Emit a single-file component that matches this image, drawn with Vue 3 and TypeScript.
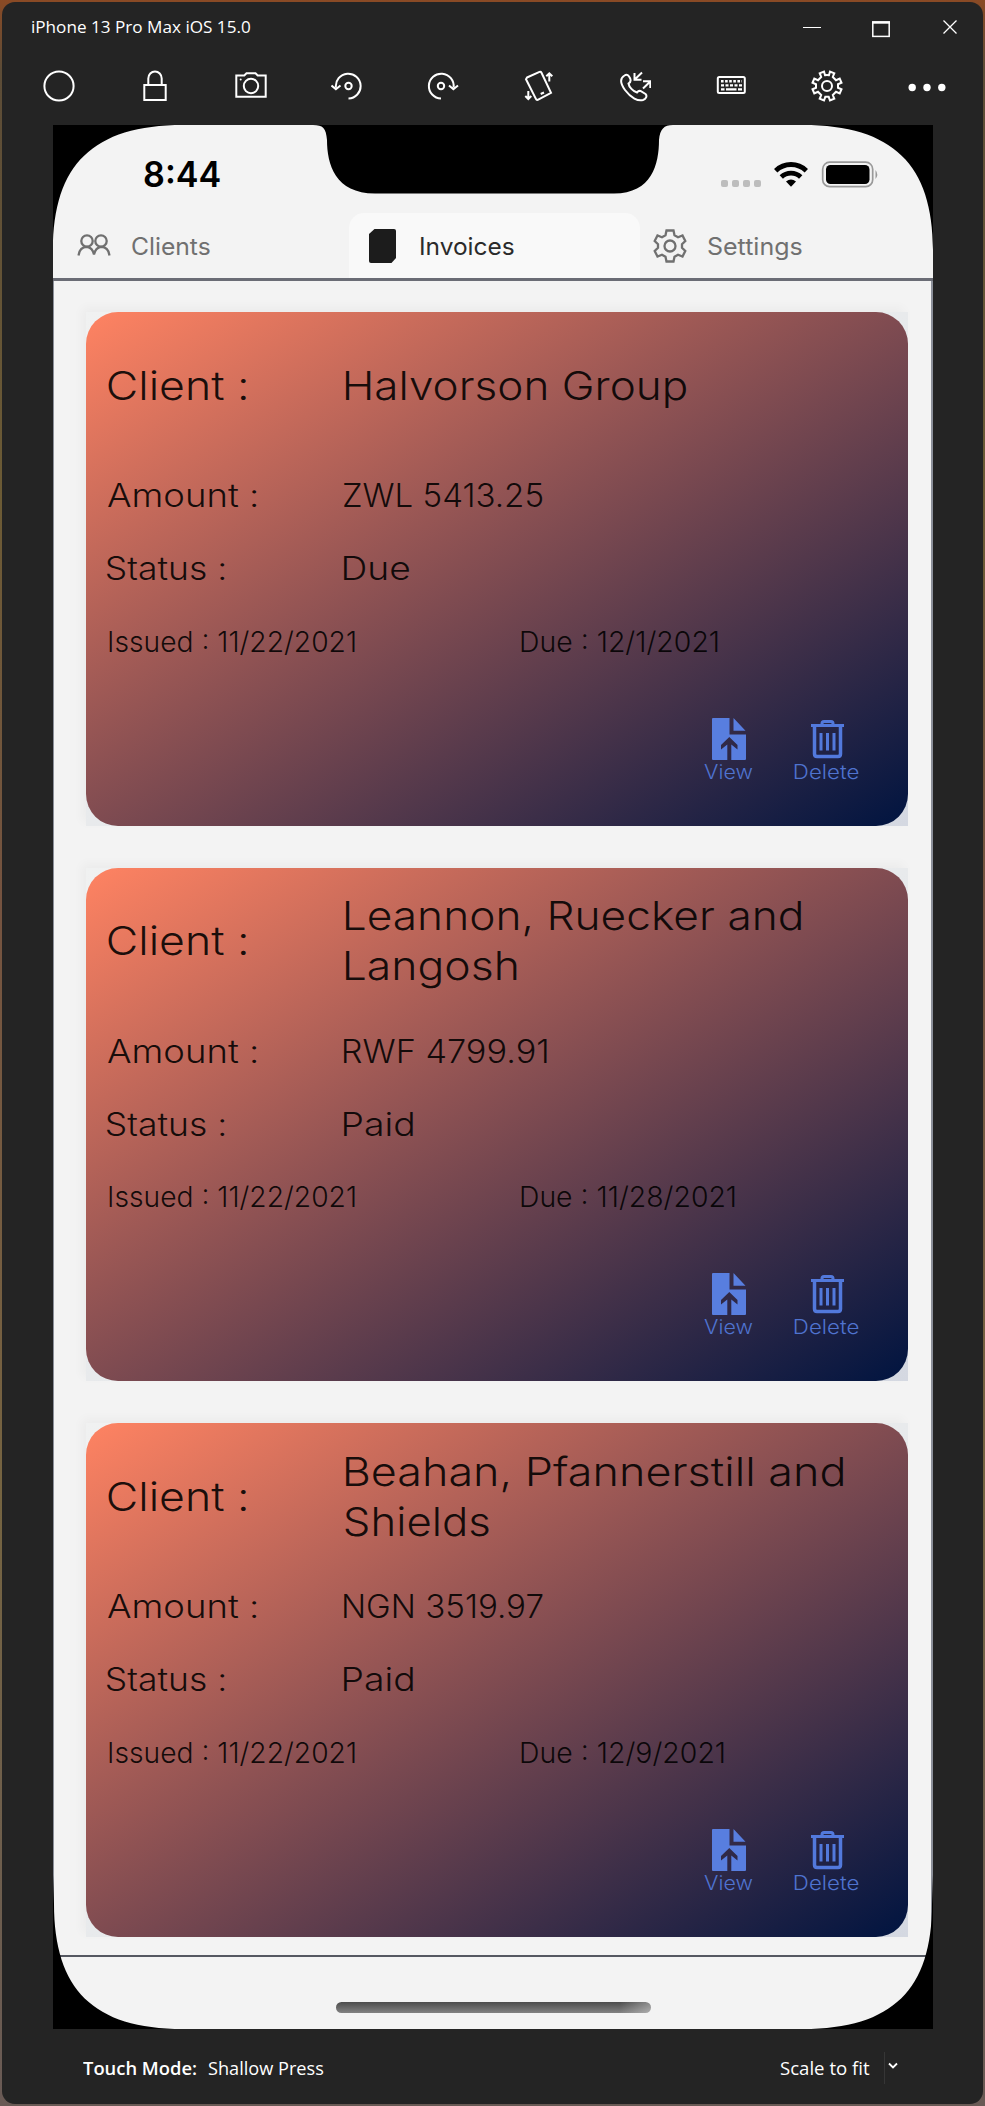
<script setup lang="ts">
interface Invoice {
  id: number
  client: { text: string; width: number }[]
  amount: string
  amountWidth: number
  status: string
  statusWidth: number
  due: string
  dueWidth: number
}

const invoices: Invoice[] = [
  {
    id: 1,
    client: [{ text: 'Halvorson Group', width: 341 }],
    amount: 'ZWL 5413.25', amountWidth: 198,
    status: 'Due', statusWidth: 65,
    due: 'Due : 12/1/2021', dueWidth: 197,
  },
  {
    id: 2,
    client: [{ text: 'Leannon, Ruecker and', width: 456 }, { text: 'Langosh', width: 172 }],
    amount: 'RWF 4799.91', amountWidth: 203,
    status: 'Paid', statusWidth: 69,
    due: 'Due : 11/28/2021', dueWidth: 214,
  },
  {
    id: 3,
    client: [{ text: 'Beahan, Pfannerstill and', width: 498 }, { text: 'Shields', width: 144 }],
    amount: 'NGN 3519.97', amountWidth: 199,
    status: 'Paid', statusWidth: 69,
    due: 'Due : 12/9/2021', dueWidth: 203,
  },
]

// Stretches a label horizontally so that its visible glyphs span the given width.
const vSpan = {
  mounted(el: HTMLElement, binding: { value: number }) {
    const ctx = document.createElement('canvas').getContext('2d')
    if (!ctx) return
    const css = getComputedStyle(el)
    ctx.font = `${css.fontWeight} ${css.fontSize} ${css.fontFamily}`
    const m = ctx.measureText((el.textContent ?? '').trim())
    const scale = binding.value / (m.actualBoundingBoxRight + m.actualBoundingBoxLeft)
    el.style.transform = `translateX(${m.actualBoundingBoxLeft * scale}px) scaleX(${scale})`
  },
}
</script>

<template>
  <div class="desktop">
    <div class="window">
      <header class="titlebar">
        <span v-span="218" class="label">iPhone 13 Pro Max iOS 15.0</span>
        <svg class="controls" width="156" height="20" viewBox="0 0 156 20" fill="none" stroke="#fff">
          <path d="M0 9.5H18" />
          <rect x="69.8" y="4" width="16.4" height="14.4" stroke-width="1.5" />
          <path d="M69 4.5H87" stroke-width="2.4" />
          <path d="M140.5 2.5L153.500 15.500M153.500 2.500L140.500 15.500" stroke-width="1.3" />
        </svg>
      </header>

      <nav class="toolbar">
        <svg viewBox="0 0 32 32"><circle cx="16" cy="16" r="14.6" /></svg>
        <svg viewBox="0 0 32 32"><path d="M5.300 15H26.700V30H5.300ZM9.300 15V8.500a6.700 7 0 0 1 13.400 0V15" /></svg>
        <svg viewBox="0 0 32 32">
          <path d="M1.300 5.500H9.300L11.500 3.300H20.500L22.700 5.500H30.700V26.700H1.300Z" />
          <circle cx="16" cy="16" r="7.200" /><circle cx="5.700" cy="9.500" r="1" class="solid" />
        </svg>
        <svg viewBox="0 0 32 32">
          <path d="M17.500 28.500A12.400 12.400 0 1 0 4.900 17.500M.5 15.500L4.900 19.300L9.500 15.500" /><circle cx="17.500" cy="16" r="3.200" />
        </svg>
        <svg viewBox="0 0 32 32">
          <path d="M14 28.500A12.400 12.400 0 1 1 26.600 17.500M22 15.500L26.400 19.300L31 15.500" /><circle cx="14" cy="16" r="3.200" />
        </svg>
        <svg viewBox="0 0 32 32">
          <path d="M4 7.500L16.500 1.900Q17.800 1.400 18.500 2.700L28 22.800L14.800 29.800Q13.500 30.200 12.900 28.900L3 9.200ZM17.700 24L21 22.500M26.300 11.500V3.500M23.300 6.300L26.300 3.300L29.300 6.300M5.300 21V29M2.300 26L5.300 29L8.300 26" />
        </svg>
        <svg viewBox="0 0 32 32">
          <path d="M5.500 5.500C1 8 .8 13 6 20C12 28 19 31.500 24 30C27 29 28.500 26 26.500 24L21.500 21Q19.500 20.400 18 22.500C14 21.500 10 17 9.500 13.500C12 12 12 10.500 11.200 8.500C9.700 5.200 8 4 5.500 5.500ZM23 2.500L16 9.300M15.500 3V9.800H22.500M24 18.500L31 11.800M24 11.200H31.300V18" />
        </svg>
        <svg viewBox="0 0 32 32">
          <rect x="2.800" y="7" width="27" height="16" rx="1.500" />
          <path d="M6 11.300H27" stroke-dasharray="2.600 1.500" stroke-width="2.400" />
          <path d="M6 15.300H27" stroke-dasharray="3 1.500" stroke-width="2.200" />
          <path d="M6 19.300H9.500M11 19.300H21.500M23 19.300H27" stroke-width="2.200" />
        </svg>
        <svg viewBox="0 0 32 32">
          <path d="M13 1.500L14 5.200Q16 4.800 18 5.200L19 1.500L23.300 3.200L21.800 7L25 10.200L28.700 8.500L30.500 12.800L27 14.200V17.800L30.500 19.200L28.700 23.500L25 21.800L21.800 25L23.300 28.800L19 30.500L17.700 26.800H14.300L13 30.500L8.700 28.800L10.200 25L7 21.800L3.300 23.500L1.500 19.200L5 17.800V14.200L1.500 12.800L3.300 8.500L7 10.200L10.200 7L8.700 3.200Z" />
          <circle cx="16" cy="16" r="5" />
        </svg>
        <svg class="more" viewBox="0 0 40 32">
          <g class="solid"><circle cx="5.200" cy="17.500" r="3.700" /><circle cx="20" cy="17.500" r="3.700" /><circle cx="34.800" cy="17.500" r="3.700" /></g>
        </svg>
      </nav>

      <main class="device">
        <div class="statusbar">
          <span v-span="76" class="clock label">8:44</span>
          <svg width="160" height="30" viewBox="0 0 160 30">
            <g fill="#bdbdbd">
              <rect x="1" y="20" width="7" height="7" rx="2" /><rect x="12" y="20" width="7" height="7" rx="2" />
              <rect x="23" y="20" width="7" height="7" rx="2" /><rect x="34" y="20" width="7" height="7" rx="2" />
            </g>
            <g fill="none" stroke="#000" stroke-width="4.800">
              <path d="M55.700 10.700A22 22 0 0 1 86.300 10.700" /><path d="M61.300 17A14 14 0 0 1 80.700 17" />
            </g>
            <path d="M66 21.500Q71 17.500 76 21.500L71 26.800Z" />
            <rect x="102.700" y="2.200" width="50" height="24.500" rx="7" fill="none" stroke="#999" stroke-width="1.700" />
            <rect x="106" y="5" width="43.500" height="19" rx="4.500" />
            <path d="M155.500 10Q159 14.500 155.500 19Z" fill="#999" />
          </svg>
        </div>

        <div class="tabs">
          <div class="tab clients">
            <svg width="34" height="34" viewBox="0 0 34 34">
              <circle cx="10" cy="12" r="5.700" /><circle cx="24" cy="12" r="5.700" />
              <path d="M1.500 26.500Q2.500 17.800 10 17.800Q15.500 18.500 17 25.500Q18.500 18.500 24 17.800Q31.500 17.800 32.500 26.500" />
            </svg>
            <span v-span="78" class="label">Clients</span>
          </div>
          <div class="tab active">
            <svg width="28" height="34" viewBox="0 0 28 34">
              <path d="M5.500 0H25Q27 0 27 2V29L22.500 34H2Q0 34 0 32V5Z" fill="#1c1c1c" stroke="none" />
            </svg>
            <span v-span="93" class="label">Invoices</span>
          </div>
          <div class="tab settings">
            <svg width="34" height="34" viewBox="0 0 34 34">
              <path d="M13.500 1.500H20.500L21.500 6.300L25 8.300L29.500 6.500L32.300 12L29 15.200V18.800L32.300 22L29.500 27.500L25 25.700L21.500 27.700L20.500 32.500H13.500L12.500 27.700L9 25.700L4.500 27.500L1.700 22L5 18.800V15.200L1.700 12L4.500 6.500L9 8.300L12.500 6.300Z" />
              <circle cx="17" cy="17" r="5.500" />
            </svg>
            <span v-span="94" class="label">Settings</span>
          </div>
        </div>

        <section class="list">
          <div v-for="invoice in invoices" :key="invoice.id" class="slot">
            <article class="card">
              <div class="row name">
                <span><span v-span="138" class="label">Client :</span></span>
                <div class="lines">
                  <div v-for="line in invoice.client" :key="line.text"><span v-span="line.width" class="label">{{ line.text }}</span></div>
                </div>
              </div>
              <div class="row">
                <span><span v-span="150" class="label">Amount :</span></span>
                <span><span v-span="invoice.amountWidth" class="label">{{ invoice.amount }}</span></span>
              </div>
              <div class="row">
                <span><span v-span="118" class="label">Status :</span></span>
                <span><span v-span="invoice.statusWidth" class="label">{{ invoice.status }}</span></span>
              </div>
              <div class="row dates">
                <span><span v-span="246" class="label">Issued : 11/22/2021</span></span>
                <span><span v-span="invoice.dueWidth" class="label">{{ invoice.due }}</span></span>
              </div>
              <div class="actions">
                <div class="action view">
                  <svg width="34" height="42" viewBox="0 0 34 42">
                    <path d="M1 0H17.500V16.500H34V41Q34 42 33 42H19.300V26.500L25.500 31.500V27L17.300 19L9 27V31.500L15.300 26.500V42H1Q0 42 0 41V1Q0 0 1 0ZM21.500 0L33.500 12.700H21.500Z" fill="#587edf" />
                  </svg>
                  <span v-span="49" class="label">View</span>
                </div>
                <div class="action delete">
                  <svg width="34" height="42" viewBox="0 0 34 42" fill="none" stroke="#5279dc">
                    <path d="M0 7.500H33M11 7V5.500Q11 3.500 13 3.500H20Q22 3.500 22 5.500V7" stroke-width="3" />
                    <path d="M3.500 8V36Q3.500 38.500 6 38.500H27Q29.500 38.500 29.500 36V8" stroke-width="3.500" />
                    <path d="M10 15V32.500M16.500 15V32.500M23 15V32.500" stroke-width="3" />
                  </svg>
                  <span v-span="65" class="label">Delete</span>
                </div>
              </div>
            </article>
          </div>
        </section>

        <div class="bottom"><div class="home"></div></div>

        <svg class="bezel" width="880" height="1904" viewBox="0 0 880 1904">
          <path d="M0 0H130C40 0 0 40 0 125ZM880 0H750C840 0 880 40 880 125ZM0 1904H130C40 1904 1 1864 1 1779L0 1750ZM880 1904H750C840 1904 879 1864 879 1779L880 1750Z" />
          <path d="M260 0C270 0 273 3 274 15C274 39 282 68.500 322 68.500H561C599 68.500 606 39 606 15C607 4 611 0 620 0Z" />
        </svg>
      </main>

      <footer class="footer">
        <b><span v-span="113" class="label">Touch Mode:</span></b>
        <span class="mode"><span v-span="115" class="label">Shallow Press</span></span>
        <span class="scale"><span v-span="90" class="label">Scale to fit</span></span>
        <i class="divider"></i>
        <svg width="10" height="8" viewBox="0 0 10 8"><path d="M1 1.500L5 5.500L9 1.500" fill="none" stroke="#fff" stroke-width="1.800" /></svg>
      </footer>
    </div>
  </div>
</template>

<style>
body { margin: 0; }
</style>

<style scoped>
* { box-sizing: border-box; }
svg { display: block; flex: none; }
.label { display: inline-block; white-space: nowrap; transform-origin: 0 50%; }
.desktop {
  width: 985px; height: 2106px; padding: 2px;
  background: linear-gradient(#8a4a25 0, #5c4c37 70px, #6c5b35 500px, #755340 900px, #756441 1500px, #695a55 2106px);
}
.window {
  width: 981px; height: 2102px; border-radius: 13px; background: #242424; color: #fff;
  display: flex; flex-direction: column; font-family: "Open Sans", "Noto Sans", sans-serif;
}
.titlebar { height: 50px; padding: 0 25px 0 30px; display: flex; justify-content: space-between; align-items: flex-start; font-size: 17px; line-height: 24px; }
.titlebar .label { margin-top: 13px; }
.controls { margin-top: 16px; }
.titlebar .controls { margin-right: -1px; }
.toolbar { height: 73px; display: grid; grid-template-columns: repeat(9, 95.900px) 1fr; padding-left: 9.500px; align-items: start; }
.toolbar svg { width: 32px; height: 32px; margin: 18px 0 0 32px; fill: none; stroke: #fff; stroke-width: 2; }
.toolbar svg:first-child { margin-left: 31.500px; }
.toolbar svg.more { width: 40px; margin-left: 32px; }
.toolbar .solid { fill: #fff; stroke: none; }
.device {
  position: relative; width: 880px; height: 1904px; margin-left: 51px; flex: none; overflow: hidden;
  background: #f3f3f3; color: #000; display: flex; flex-direction: column; font-family: Inter, "Liberation Sans", sans-serif;
}
.statusbar { height: 88px; display: flex; justify-content: space-between; padding: 0 53px 0 91px; }
.statusbar svg { margin-top: 35px; }
.clock { font-size: 35px; font-weight: 600; line-height: 44px; margin-top: 27px; }
.tabs { height: 68px; display: grid; grid-template-columns: 296px 291px 1fr; border-bottom: 3px solid #6a6c75; font-size: 24px; color: #707070; }
.tab { display: flex; align-items: center; padding-top: 1px; }
.tab svg { fill: none; stroke: #707070; stroke-width: 2.300; }
.clients { padding-left: 24px; gap: 21px; }
.active { padding-left: 20px; gap: 24px; background: #f9f9f9; color: #2b2b2b; border-radius: 15px 15px 0 0; }
.settings { padding-left: 13px; gap: 21px; }
.list {
  height: 1676px; padding: 31px 0 0 32px; border: 1px solid #8b8f99; border-width: 0 2px 2px 1px; border-bottom-color: #555861;
  display: flex; flex-direction: column; gap: 42px;
}
.slot { width: 822px; height: 513.500px; flex: none; background: linear-gradient(to bottom right, #f0f1f1, #e8eaec 50%, #d4d8e1); box-shadow: -4px -4px 10px rgba(0, 40, 40, .035); }
.card { height: 100%; border-radius: 32px; background: linear-gradient(to bottom right, #ff8362, #001440); display: flex; flex-direction: column; overflow: hidden; color: rgba(0, 0, 0, .88); }
.row { height: 73px; display: grid; grid-template-columns: 236.500px 1fr; align-items: center; padding: 2px 0 0 21px; font-size: 32px; font-weight: 350; line-height: 50px; }
.name { height: 145px; margin-bottom: 1.500px; padding-left: 21.500px; grid-template-columns: 237.500px 1fr; font-size: 40px; }
.lines > div { height: 50px; }
.dates { grid-template-columns: 412px 1fr; font-size: 28px; padding: 1px 0 0 22.500px; }
.actions { display: flex; margin: 40px 0 0 617.500px; }
.action { color: #4f73cf; font-size: 19.500px; font-weight: 350; line-height: 24px; }
.view { width: 90px; }
.view svg { margin-left: 8px; }
.delete svg { margin-left: 17px; }
.bottom { flex: 1; display: flex; justify-content: center; align-items: flex-end; padding-bottom: 16px; }
.home { width: 315px; height: 11px; border-radius: 6px; background: linear-gradient(90deg, transparent 90%, rgba(255, 255, 255, .35)), linear-gradient(#4c4c4c, #828282); }
.bezel { position: absolute; left: 0; top: 0; }
.footer { flex: 1; display: flex; align-items: center; padding: 2px 0 0 81px; font-size: 18.500px; line-height: 26px; }
.footer b { width: 125px; font-weight: 600; }
.mode { width: 572px; }
.scale { width: 104px; }
.divider { width: 1px; height: 32px; background: #363636; margin-right: 3px; }
.footer svg { margin-top: -4px; }
</style>
